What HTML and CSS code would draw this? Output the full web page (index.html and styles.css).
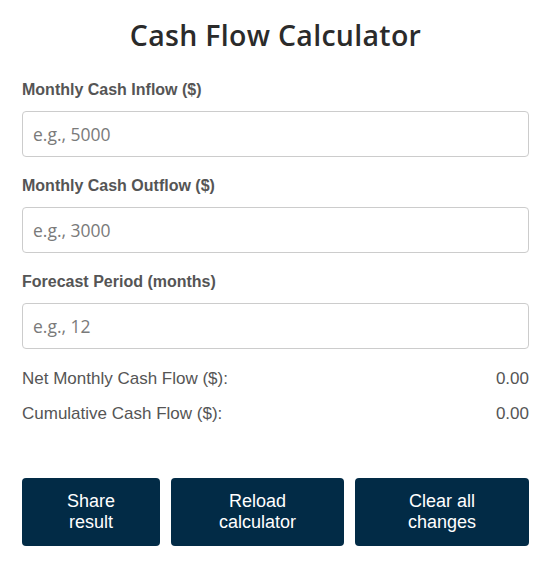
FILE: index.html
```html
<!DOCTYPE html>
<html lang="en">
<head>
<meta charset="utf-8">
<title>Cash Flow Calculator</title>
<link rel="stylesheet" href="styles.css">
</head>
<body>
<div class="calc">
  <h1 class="title">Cash Flow Calculator</h1>
  <div class="field">
    <label class="label" for="inflow">Monthly Cash Inflow ($)</label>
    <input class="input" id="inflow" type="text" placeholder="e.g., 5000">
  </div>
  <div class="field">
    <label class="label" for="outflow">Monthly Cash Outflow ($)</label>
    <input class="input" id="outflow" type="text" placeholder="e.g., 3000">
  </div>
  <div class="field">
    <label class="label" for="period">Forecast Period (months)</label>
    <input class="input" id="period" type="text" placeholder="e.g., 12">
  </div>
  <div class="results">
    <div class="row"><span>Net Monthly Cash Flow ($):</span><span>0.00</span></div>
    <div class="row"><span>Cumulative Cash Flow ($):</span><span>0.00</span></div>
  </div>
  <div class="actions">
    <button class="btn">Share<br>result</button>
    <button class="btn">Reload<br>calculator</button>
    <button class="btn">Clear all<br>changes</button>
  </div>
</div>
</body>
</html>
```
FILE: styles.css
```css
html, body {
  margin: 0;
  padding: 0;
  background: #ffffff;
}
.calc {
  padding: 1px 21px 0 22px;
  font-family: "Liberation Sans", Arial, sans-serif;
}
.title {
  margin: 0;
  padding-top: 15px;
  height: 80px;
  box-sizing: border-box;
  text-align: center;
  font-family: "Open Sans", sans-serif;
  font-weight: 600;
  font-size: 28.5px;
  line-height: 38px;
  color: #2b2b2b;
  letter-spacing: 0.3px;
}
.field {
  display: flex;
  flex-direction: column;
  margin-bottom: 20px;
}
.label {
  font-size: 16px;
  line-height: 18px;
  font-weight: bold;
  color: #555555;
  margin-bottom: 12px;
}
.input {
  box-sizing: border-box;
  height: 46px;
  width: 100%;
  border: 1px solid #cccccc;
  border-radius: 4px;
  padding: 0 10px;
  font-family: "Open Sans", sans-serif;
  font-size: 17.5px;
  color: #333;
  outline: none;
}
.input::placeholder {
  color: #7a7a7a;
}
.results {
  margin-top: 1px;
  display: flex;
  flex-direction: column;
  gap: 15px;
}
.row {
  display: flex;
  justify-content: space-between;
  font-size: 17px;
  line-height: 20px;
  color: #555555;
}
.actions {
  margin-top: 54px;
  display: grid;
  grid-template-columns: 138fr 173fr 174fr;
  gap: 11px;
}
.btn {
  height: 68px;
  border: none;
  border-radius: 4px;
  background: #022b46;
  color: #ffffff;
  font-family: "Liberation Sans", Arial, sans-serif;
  font-size: 18px;
  line-height: 21px;
  padding: 0 10px;
}
```
